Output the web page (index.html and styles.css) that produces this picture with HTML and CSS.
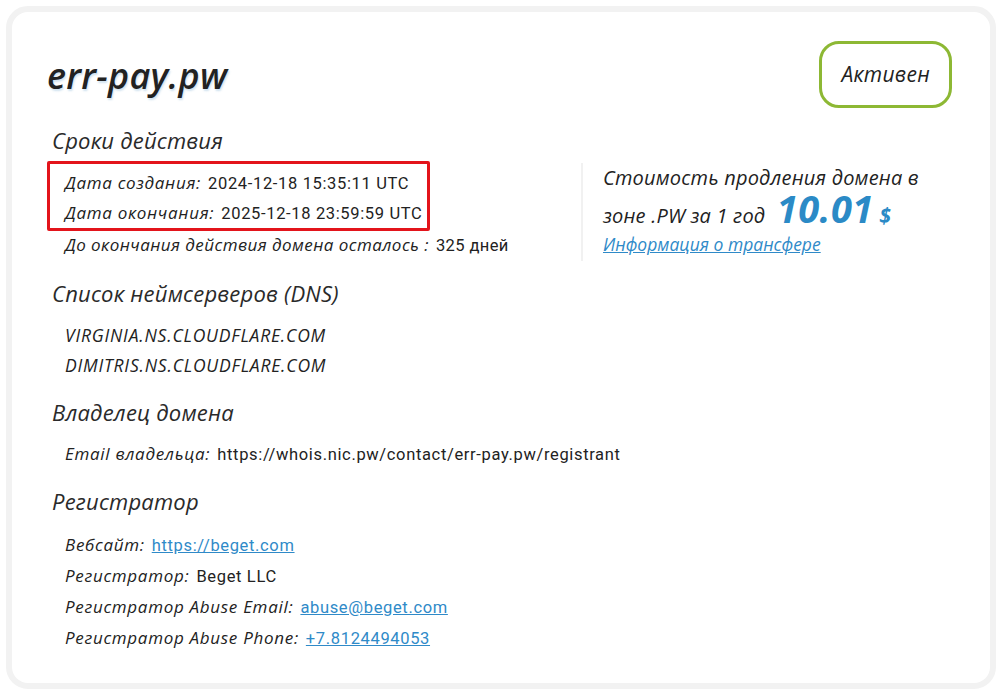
FILE: index.html
```html
<!DOCTYPE html>
<html lang="ru">
<head>
<meta charset="utf-8">
<title>err-pay.pw</title>
<link rel="stylesheet" href="styles.css">
</head>
<body>
<div class="card">
  <div class="header">
    <h1 class="title">err-pay.pw</h1>
    <span class="badge">Активен</span>
  </div>
  <div class="top">
    <div class="left">
      <h2 class="section-title">Сроки действия</h2>
      <div class="highlight">
        <div class="row"><span class="label">Дата создания:</span><span class="value">2024-12-18 15:35:11 UTC</span></div>
        <div class="row"><span class="label">Дата окончания:</span><span class="value">2025-12-18 23:59:59 UTC</span></div>
      </div>
      <div class="row remain"><span class="label">До окончания действия домена осталось :</span><span class="value">325 дней</span></div>
    </div>
    <div class="price">
      <div class="price-text">Стоимость продления домена в<br>зоне .PW за 1 год <span class="amount">10.01</span> <span class="currency">$</span></div>
      <a class="transfer" href="#">Информация о трансфере</a>
    </div>
  </div>

  <h2 class="section-title">Список неймсерверов (DNS)</h2>
  <div class="list">
    <div class="row ns">VIRGINIA.NS.CLOUDFLARE.COM</div>
    <div class="row ns">DIMITRIS.NS.CLOUDFLARE.COM</div>
  </div>

  <h2 class="section-title">Владелец домена</h2>
  <div class="list">
    <div class="row"><span class="label">Email владельца:</span><span class="value">https://whois.nic.pw/contact/err-pay.pw/registrant</span></div>
  </div>

  <h2 class="section-title">Регистратор</h2>
  <div class="list registrar">
    <div class="row"><span class="label">Вебсайт:</span><a class="value link" href="#">https://beget.com</a></div>
    <div class="row"><span class="label">Регистратор:</span><span class="value">Beget LLC</span></div>
    <div class="row"><span class="label">Регистратор Abuse Email:</span><a class="value link" href="#">abuse@beget.com</a></div>
    <div class="row"><span class="label">Регистратор Abuse Phone:</span><a class="value link" href="#">+7.8124494053</a></div>
  </div>
</div>
</body>
</html>
```

FILE: styles.css
```css
* { box-sizing: border-box; }
html, body { margin: 0; padding: 0; background: #ffffff; }
body {
  font-family: "Open Sans", "Noto Sans", sans-serif;
  color: #222;
  padding: 6px;
}
.card {
  width: 990px;
  height: 683px;
  border: 6px solid #f2f2f2;
  border-radius: 22px;
  padding: 28px 38px 0 35px;
  background: #fff;
}
.header {
  display: flex;
  justify-content: space-between;
  align-items: flex-start;
}
.title {
  margin: 16px 0 0 0;
  font-size: 36px;
  font-style: italic;
  font-weight: 600;
  letter-spacing: 0.3px;
  color: #222;
  line-height: 40px;
  text-shadow: 1px 2px 2px rgba(150, 190, 220, 0.45);
}
.badge {
  display: inline-block;
  margin-top: 1px;
  border: 3px solid #8db834;
  border-radius: 20px;
  padding: 17px 19px;
  font-size: 21px;
  font-style: italic;
  letter-spacing: 0.3px;
  line-height: 27px;
  color: #222;
}
.top {
  display: flex;
  margin-top: 17px;
}
.left { width: 534px; }
.section-title {
  margin: 0 0 0 5px;
  font-size: 22px;
  font-weight: 400;
  font-style: italic;
  letter-spacing: 0.2px;
  color: #2a2a2a;
  line-height: 30px;
}
.highlight {
  margin-top: 6px;
  width: 383px;
  border: 3px solid #e3141b;
  border-radius: 2px;
  padding: 4px 0 0 15px;
  height: 70px;
}
.row {
  display: flex;
  align-items: baseline;
  line-height: 30px;
  height: 30px;
  white-space: nowrap;
}
.row.remain { padding-left: 18px; height: 28px; line-height: 28px; }
.label {
  font-style: italic;
  color: #222;
  margin-right: 7px;
  font-size: 17px;
  letter-spacing: 0.7px;
}
.remain .label { letter-spacing: 0.45px; }
.value {
  font-family: "Roboto", "Noto Sans", sans-serif;
  color: #222;
  font-size: 16.5px;
  letter-spacing: 0.65px;
}
.remain .value { letter-spacing: 0.4px; }
.price {
  margin-top: 38px;
  border-left: 2px solid #f1f1f1;
  padding-left: 20px;
  height: 98px;
}
.price-text {
  font-size: 20px;
  font-style: italic;
  letter-spacing: 0.2px;
  line-height: 30px;
  color: #222;
}
.amount {
  display: inline-block;
  height: 30px;
  line-height: 30px;
  font-size: 38px;
  font-weight: 700;
  font-style: italic;
  color: #2b8ac6;
  margin-left: 6px;
  letter-spacing: 0.5px;
}
.currency {
  font-size: 21px;
  font-weight: 700;
  font-style: italic;
  color: #2b8ac6;
}
.transfer {
  display: block;
  font-size: 17.5px;
  font-style: italic;
  color: #2f8ac8;
  line-height: 26px;
  margin-top: 0;
}
.card > .section-title { margin-top: 17px; }
.list { padding-left: 18px; margin-top: 12px; }
.list.registrar { margin-top: 13px; }
.registrar .row { height: 31px; line-height: 31px; }
.ns { font-style: italic; font-size: 17.5px; letter-spacing: 0.8px; }
.link { color: #2f8ac8; text-decoration: underline; }
```
